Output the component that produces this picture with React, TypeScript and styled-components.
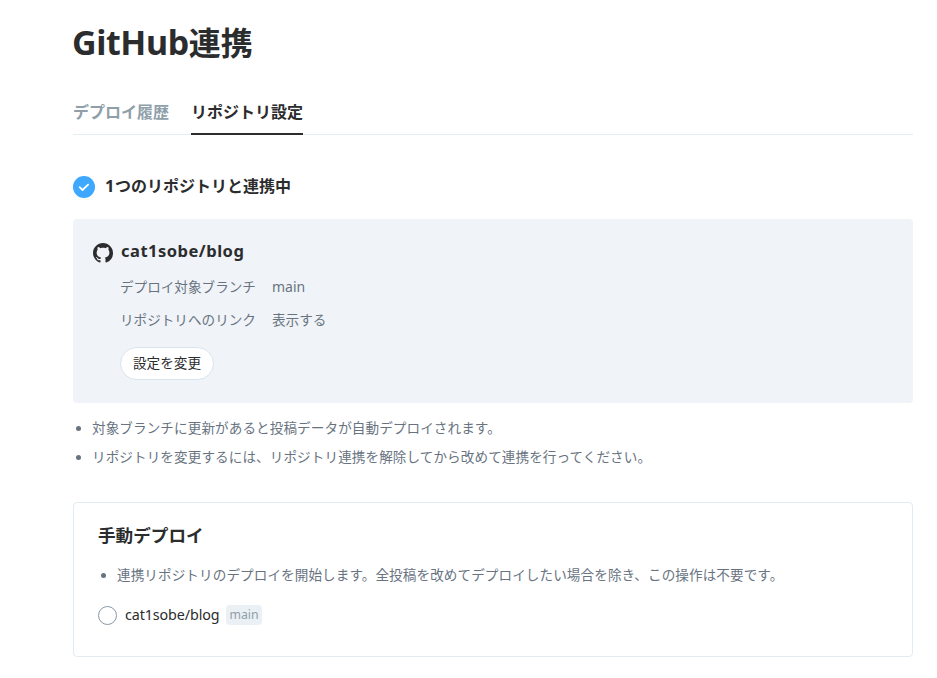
import React from "react";
import styled, { createGlobalStyle } from "styled-components";

const GlobalStyle = createGlobalStyle`
  * { box-sizing: border-box; }
  body {
    margin: 0;
    background: #fff;
    color: #2b2c2d;
    font-family: "Noto Sans CJK JP", sans-serif;
    font-size: 13.6px;
  }
  h1, h2, h3, ul { margin: 0; padding: 0; }
`;

const Page = styled.main`
  width: 840px;
  margin-left: 73px;
  padding-top: 17px;
`;

const Latin = styled.span<{ $size?: number; $spacing?: number }>`
  font-family: "Noto Sans", sans-serif;
  font-size: ${(p) => (p.$size ? `${p.$size}px` : "inherit")};
  letter-spacing: ${(p) => p.$spacing ?? 0}px;
`;

const Title = styled.h1`
  height: 48px;
  margin-left: -1px;
  font-size: 32px;
  line-height: 48px;
  font-weight: 700;
  white-space: nowrap;
`;

const Tabs = styled.nav`
  display: flex;
  gap: 22px;
  height: 45px;
  margin-top: 25px;
  border-bottom: 1px solid #e3edf4;
`;

const Tab = styled.a<{ $active?: boolean }>`
  height: 45px;
  font-size: 16px;
  font-weight: 700;
  line-height: 42px;
  color: ${(p) => (p.$active ? "#2b2c2d" : "#8f9faa")};
  border-bottom: ${(p) => (p.$active ? "2px solid #2b2c2d" : "0")};
`;

const Status = styled.h2`
  display: flex;
  align-items: center;
  gap: 10px;
  height: 24px;
  margin-top: 40px;
  font-size: 16px;
  line-height: 24px;
`;

const StatusText = styled.span`
  padding-bottom: 4px;
`;

const RepoPanel = styled.section`
  height: 184px;
  margin-top: 20px;
  padding: 20px;
  border-radius: 4px;
  background: #f0f3f8;
`;

const RepoName = styled.h3`
  display: flex;
  align-items: center;
  gap: 8px;
  height: 25px;
  line-height: 23px;

  svg { margin-top: 2px; }
  span { padding-bottom: 2px; }
`;

const Details = styled.div`
  margin-left: 27px;
  padding-top: 6px;
  color: #68737f;
`;

const Detail = styled.div`
  display: grid;
  grid-template-columns: 136px auto;
  column-gap: 16px;
  height: 33px;
  line-height: 33px;
`;

const EditButton = styled.button`
  width: 94px;
  height: 33px;
  margin: 11px 0 0 27px;
  padding: 0 0 4px;
  border: 1px solid #d7e4ed;
  border-radius: 17px;
  background: #fff;
  color: #2b2c2d;
  font: inherit;
`;

const Notes = styled.ul`
  list-style: none;
  color: #68737f;
`;

const Note = styled.li`
  display: flex;
  align-items: center;
  gap: 11px;
  height: 29px;
  padding-left: 3px;
  line-height: 29px;
  letter-spacing: 0.08px;
  white-space: nowrap;

  &::before {
    content: "";
    width: 5px;
    height: 5px;
    margin-top: 2px;
    border-radius: 50%;
    background: #68737f;
  }
`;

const RepoNotes = styled(Notes)`
  margin-top: 10px;
`;

const DeployCard = styled.section`
  height: 155px;
  margin-top: 31px;
  padding: 18px 24px;
  border: 1px solid #e1ebf4;
  border-radius: 4px;
`;

const DeployTitle = styled.h2`
  height: 28px;
  margin-bottom: 11px;
  font-size: 17.6px;
  line-height: 28px;
`;

const RepoOption = styled.label`
  display: flex;
  align-items: center;
  height: 24px;
  margin-top: 14px;
`;

const OptionName = styled.span`
  width: 95px;
  padding-bottom: 2px;
  white-space: nowrap;
`;

const Radio = styled.input`
  appearance: none;
  width: 19px;
  height: 19px;
  margin: 0 8px 0 0;
  border: 1px solid #8999a7;
  border-radius: 50%;
  background: #fff;
`;

const Branch = styled.span`
  display: flex;
  justify-content: center;
  align-items: center;
  width: 36px;
  height: 20px;
  margin-left: 6px;
  padding-bottom: 2px;
  border-radius: 4px;
  background: #ebf0f5;
  color: #8f9faa;
`;

const CheckIcon = () => (
  <svg width="22" height="22" viewBox="0 0 22 22" fill="none">
    <circle cx="11" cy="11" r="11" fill="#3ea8ff" />
    <path d="m6.7 11.2 2.8 2.8 5.6-5.4" stroke="#fff" strokeWidth="1.8" strokeLinecap="round" strokeLinejoin="round" />
  </svg>
);

const GithubIcon = () => (
  <svg width="20" height="20" viewBox="0 0 16 16" fill="#2b2c2d">
    <path d="M8 0C3.58 0 0 3.58 0 8c0 3.54 2.29 6.53 5.47 7.59.4.07.55-.17.55-.38 0-.19-.01-.82-.01-1.49-2.01.37-2.53-.49-2.69-.94-.09-.23-.48-.94-.82-1.13-.28-.15-.68-.52-.01-.53.63-.01 1.08.58 1.23.82.72 1.21 1.87.87 2.33.66.07-.52.28-.87.51-1.07-1.78-.2-3.64-.89-3.64-3.95 0-.87.31-1.59.82-2.15-.08-.2-.36-1.02.08-2.12 0 0 .67-.21 2.2.82.64-.18 1.32-.27 2-.27s1.36.09 2 .27c1.53-1.04 2.2-.82 2.2-.82.44 1.1.16 1.92.08 2.12.51.56.82 1.27.82 2.15 0 3.07-1.87 3.75-3.65 3.95.29.25.54.73.54 1.48 0 1.07-.01 1.93-.01 2.2 0 .21.15.46.55.38A8.01 8.01 0 0 0 16 8c0-4.42-3.58-8-8-8" />
  </svg>
);

export default function App() {
  return (
    <>
      <GlobalStyle />
      <Page>
        <Title><Latin $size={34} $spacing={-0.4}>GitHub</Latin>連携</Title>
        <Tabs>
          <Tab>デプロイ履歴</Tab>
          <Tab $active>リポジトリ設定</Tab>
        </Tabs>
        <Status>
          <CheckIcon />
          <StatusText><Latin $size={16.5} $spacing={0.6}>1</Latin>つのリポジトリと連携中</StatusText>
        </Status>
        <RepoPanel>
          <RepoName>
            <GithubIcon />
            <Latin $size={16.5} $spacing={0.5}>cat1sobe/blog</Latin>
          </RepoName>
          <Details>
            <Detail><span>デプロイ対象ブランチ</span><Latin $size={14}>main</Latin></Detail>
            <Detail><span>リポジトリへのリンク</span><span>表示する</span></Detail>
          </Details>
          <EditButton>設定を変更</EditButton>
        </RepoPanel>
        <RepoNotes>
          <Note>対象ブランチに更新があると投稿データが自動デプロイされます。</Note>
          <Note>リポジトリを変更するには、リポジトリ連携を解除してから改めて連携を行ってください。</Note>
        </RepoNotes>
        <DeployCard>
          <DeployTitle>手動デプロイ</DeployTitle>
          <Notes>
            <Note>連携リポジトリのデプロイを開始します。全投稿を改めてデプロイしたい場合を除き、この操作は不要です。</Note>
          </Notes>
          <RepoOption>
            <Radio type="radio" name="repo" />
            <OptionName><Latin $size={14.3} $spacing={-0.1}>cat1sobe/blog</Latin></OptionName>
            <Branch><Latin $size={12.3}>main</Latin></Branch>
          </RepoOption>
        </DeployCard>
      </Page>
    </>
  );
}
